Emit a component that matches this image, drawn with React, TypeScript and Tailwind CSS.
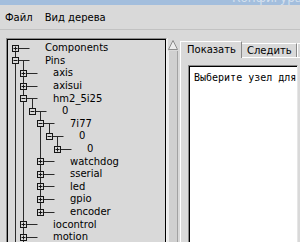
import React from 'react'

interface TreeNode {
  level: number
  label: string
  open: boolean
}

const nodes: TreeNode[] = [
  { level: 0, label: 'Components', open: false },
  { level: 0, label: 'Pins', open: true },
  { level: 1, label: 'axis', open: false },
  { level: 1, label: 'axisui', open: false },
  { level: 1, label: 'hm2_5i25', open: true },
  { level: 2, label: '0', open: true },
  { level: 3, label: '7i77', open: true },
  { level: 4, label: '0', open: true },
  { level: 5, label: '0', open: false },
  { level: 3, label: 'watchdog', open: false },
  { level: 3, label: 'sserial', open: false },
  { level: 3, label: 'led', open: false },
  { level: 3, label: 'gpio', open: false },
  { level: 3, label: 'encoder', open: false },
  { level: 1, label: 'iocontrol', open: false },
  { level: 1, label: 'motion', open: false },
]

// [level of the vertical, first row, last row]; -1 = runs off the bottom
const verticals: [number, number, number][] = [
  [0, 0, -1],
  [1, 1, -1],
  [2, 4, 5],
  [3, 5, 13],
  [4, 6, 7],
  [5, 7, 8],
]

const ROW = 12.6
const cx = (level: number) => 7.5 + Math.round(8.45 * level)
const cy = (row: number) => Math.floor(8.3 + ROW * row) + 0.5

function TreeLines() {
  return (
    <svg className="absolute inset-0 pointer-events-none" width="157" height="210" overflow="visible">
      {verticals.map(([lv, from, to], i) => (
        <line key={'v' + i} x1={cx(lv)} x2={cx(lv)} y1={cy(from)} y2={to < 0 ? 260 : cy(to)} stroke="#2a2a2a" />
      ))}
      {nodes.map((n, i) => (
        <line key={'h' + i} x1={cx(n.level)} x2={cx(n.level) + 14} y1={cy(i)} y2={cy(i)} stroke="#2a2a2a" />
      ))}
      {nodes.map((n, i) => {
        const x = cx(n.level)
        const y = cy(i)
        return (
          <g key={'b' + i}>
            <rect x={x - 3} y={y - 3} width="6" height="6" fill="#d9d9d9" stroke="#151515" />
            <line x1={x - 2} x2={x + 2} y1={y} y2={y} stroke="#151515" />
            {!n.open && <line x1={x} x2={x} y1={y - 2} y2={y + 2} stroke="#151515" />}
          </g>
        )
      })}
    </svg>
  )
}

export default function App() {
  return (
    <div
      className="w-[300px] h-[242px] overflow-hidden bg-[#d9d9d9] flex flex-col text-black"
      style={{ fontFamily: '"DejaVu Sans", "Liberation Sans", sans-serif' }}
    >
      {/* Window title (mostly cut off) */}
      <div className="h-[5px] bg-[#a3bedd] overflow-hidden">
        <div className="pl-[232px] -mt-[8px] text-[12px] leading-[12px] text-[#d4e0ee] whitespace-nowrap">
          Конфигурация HAL
        </div>
      </div>

      {/* Menu bar */}
      <div className="h-[25px] flex items-center border-b border-[#c2c2c2] text-[10px] shrink-0">
        <span className="pl-[5px] pr-[6px]">Файл</span>
        <span className="px-[6px]">Вид дерева</span>
      </div>

      <div className="flex-1 min-h-0 flex pt-[8px] pl-[6px]">
        {/* Tree */}
        <div className="w-[161px] shrink-0 border-t border-l border-r border-t-[#8a8a8a] border-l-[#8a8a8a] border-r-[#f2f2f2]">
          <div className="h-full relative border-t border-l border-r border-black pt-[2px] overflow-hidden">
            <TreeLines />
            {nodes.map((n, i) => (
              <div
                key={i}
                className="h-[12.6px] flex items-center text-[10px] leading-none whitespace-nowrap"
                style={{ paddingLeft: Math.round(37 + 8.45 * n.level) }}
              >
                {n.label}
              </div>
            ))}
          </div>
        </div>

        {/* Scrollbar */}
        <div className="w-[12px] shrink-0 flex flex-col border-l border-[#ececec] pt-[2px]">
          <svg width="10" height="10" className="shrink-0">
            <polygon points="5,0.5 0.5,9.5 9.5,9.5" fill="#ececec" stroke="#8c8c8c" />
          </svg>
          <div className="flex-1 mt-[1px] w-[10px] bg-[#d0d0d0] border-l border-[#ececec] border-r border-r-[#a2a2a2]" />
        </div>

        {/* Notebook */}
        <div className="ml-[1px] w-[126px] shrink-0 pt-[3px] flex flex-col">
          <div className="h-[16px] flex items-end relative z-10 text-[10px]">
            <div className="h-[17px] w-[62px] -mb-[1px] shrink-0 bg-[#d9d9d9] border-t border-l border-white border-r border-r-[#8a8a8a] pl-[6px] flex items-center leading-none">
              Показать
            </div>
            <div className="h-[14px] w-[55px] shrink-0 border-t border-white border-r border-r-[#8a8a8a] pl-[5px] flex items-center leading-none">
              Следить
            </div>
            <div className="h-[14px] w-[20px] shrink-0 border-t border-l border-white" />
          </div>
          <div className="flex-1 flex flex-col border-t border-l border-white p-[7px] pb-0">
            <div className="flex-1 w-[110px] bg-white border-t border-l border-[#8a8a8a] border-r border-r-[#e6e6e6] shadow-[inset_1px_1px_0_#000] pl-[5px] pt-[6px]">
              <div
                className="text-[10px] leading-[12px] whitespace-nowrap"
                style={{ fontFamily: '"DejaVu Sans Mono", "Liberation Mono", monospace' }}
              >
                Выберите узел для
              </div>
            </div>
          </div>
        </div>
      </div>
    </div>
  )
}
